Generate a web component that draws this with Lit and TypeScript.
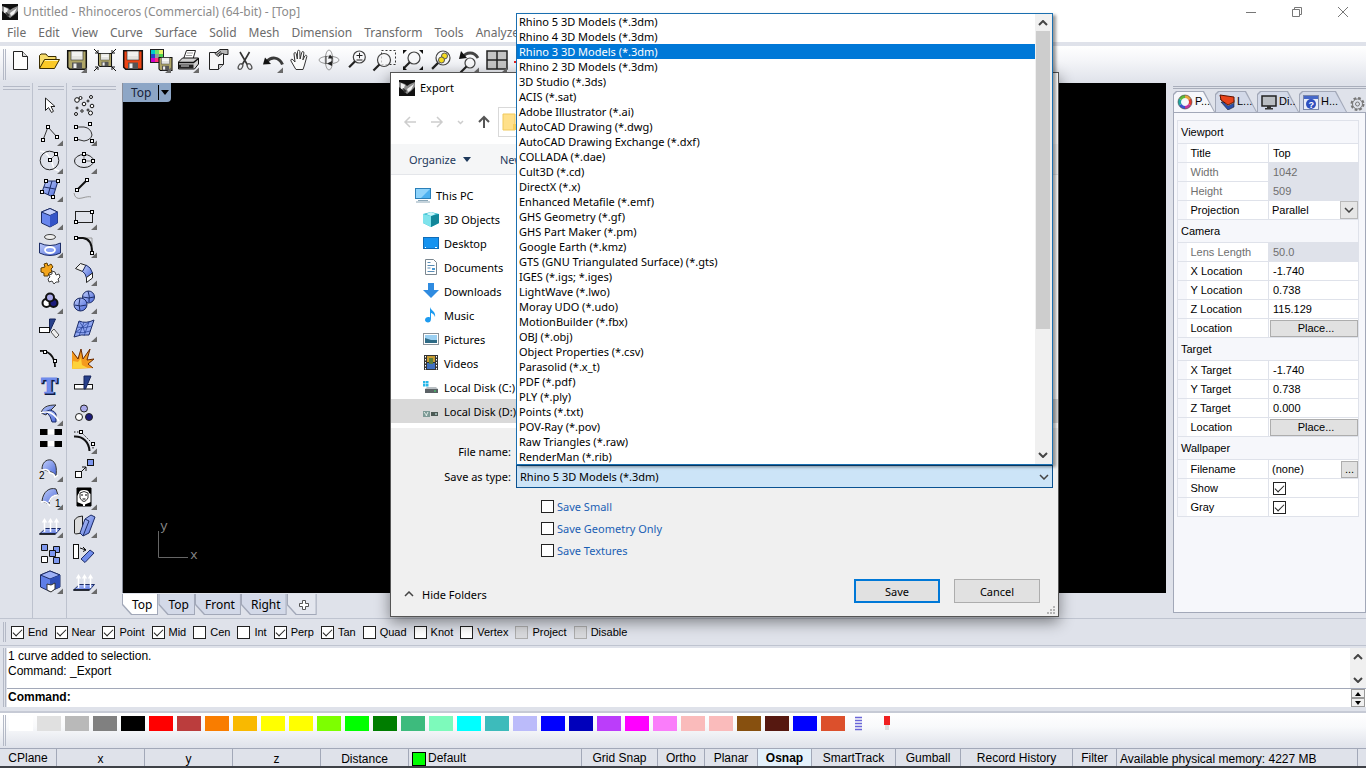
import { LitElement, html, svg, css, nothing } from "lit";
import { customElement, state } from "lit/decorators.js";
import { classMap } from "lit/directives/class-map.js";

const node = (x: number, y: number) =>
  svg`<rect x=${x - 1.5} y=${y - 1.5} width="3" height="3" fill="#fff" stroke="#000"/>`;
const dot = (x: number, y: number, r: number) =>
  svg`<circle cx=${x} cy=${y} r=${r} fill="#fff" stroke="#111"/>`;
const corner = svg`<path d="M25 21.500v5.500h-6z" fill="#6a6a6a"/>`;

const floppy = (x: number, y: number, s: number, body: string) => svg`
  <g transform="translate(${x} ${y}) scale(${s / 20})">
    <path d="M.7.700h18.600v18.600h-16.600l-2-2z" fill=${body} stroke="#111" stroke-width="1.500"/>
    <rect x="4" y="1" width="12" height="9" fill="#e4e4e0" stroke="#333" stroke-width=".6"/>
    <path d="M5 3h10M5 5h10" stroke="#fff"/>
    <rect x="5" y="12.500" width="10" height="6.500" fill="#555"/>
    <rect x="6.500" y="13.500" width="3" height="4.500" fill="#eee"/>
  </g>`;

const lens = (x: number, y: number, r: number) => svg`
  <circle cx=${x} cy=${y} r=${r} fill="#f8f8fa" fill-opacity=".7" stroke="#444" stroke-width="1.200"/>
  <path d="M${x - r * 0.7} ${y + r * 0.7}L${x - r * 0.7 - 6} ${y + r * 0.7 + 6}" stroke="#222" stroke-width="2.200"/>`;

const liftArrows = svg`
  <path d="M1.500 23L7.500 17.500h15L17.500 23z" fill="url(#blue)" stroke="#1c2c66"/>
  <path d="M1.500 23h16" stroke="#111" stroke-width="1.500"/>
  <path d="M6.500 21V9M12.500 21V9M18.500 21V9" stroke="#fff" stroke-width="1.500"/>
  <path d="M3.800 11.500L6.500 7l2.700 4.500zM9.800 11.500L12.500 7l2.700 4.500zM15.800 11.500L18.500 7l2.700 4.500z" fill="#fff"/>`;

const TOP_ICONS: [string, unknown, boolean][] = [
  ["New", svg`<path d="M7.500 5.500h9l5 5v13h-14z" fill="#fdfdfd" stroke="#222"/><path d="M16.500 5.500v5h5" fill="#ddd" stroke="#222"/>`, false],
  ["Open", svg`<path d="M5.500 22V9.500l1.500-1.500h5l2 2.500h8v3" fill="#f7dc6a" stroke="#3a2c00"/><path d="M5.500 22.500l5-9h15l-5 9z" fill="#fbc926" stroke="#3a2c00"/><path d="M11 14.500h13" stroke="#fff3b0"/>`, false],
  ["Save", floppy(5, 4, 20, "#aea567"), true],
  ["Save small", svg`${floppy(8, 7, 14, "#aea567")}<path d="M4 3l4 4M8 4v3H5M26 3l-4 4M22 4v3h3M4 25l4-4M5 21h3v3M26 25l-4-4M25 21h-3v3" fill="none" stroke="#111"/>`, false],
  ["Save as", floppy(5, 4, 20, "#ee4413"), false],
  ["Export selected", svg`<rect x="4.500" y="3.500" width="13" height="13" fill="#4bd04e" stroke="#222"/><path d="M5 4h4v4H5z" fill="#0cc"/><path d="M9 4h4v4H9z" fill="#6ee46a"/><path d="M13 4h4v4h-4z" fill="#e8f06a"/><path d="M5 8h4v4H5z" fill="#24c"/><path d="M5 12h4v4H5z" fill="#c0c"/><path d="M9 12h4v4H9z" fill="#f37"/><path d="M9 8h4v4H9z" fill="#999"/>${floppy(12.5, 11, 14, "#aea567")}`, true],
  ["Print", svg`<path d="M9.500 13l3-8.500h9l-2.500 8.500z" fill="#fff" stroke="#222"/><path d="M13 7h6M12 9.500h6" stroke="#999"/><path d="M4.500 16l4-4h16v6l-4 5h-16z" fill="#d0d0d0" stroke="#111"/><path d="M4.500 16.500h15l5-4" fill="none" stroke="#111" stroke-width="1.500"/><path d="M5 18.500h14.500v4H5z" fill="#222"/><path d="M7 20h8" stroke="#ddd"/>`, true],
  ["Document properties", svg`<path d="M7.500 6.500h14v12l-5 5h-9z" fill="#f6f6f6" stroke="#222"/><path d="M16.500 23.500v-5h5" fill="#ccc" stroke="#222"/><path d="M13 7.500l5-4h8v5h-3l-2.500-1-4.500 3z" fill="#b8b8b8" stroke="#222"/><path d="M15 8.500l4-3M17 9l3-2" stroke="#333"/>`, false],
  ["Cut", svg`<path d="M10 6l7.500 13M19.500 6L12 19" stroke="#333" stroke-width="1.600"/><ellipse cx="10.500" cy="20.500" rx="2" ry="3" transform="rotate(30 10.500 20.500)" fill="none" stroke="#555" stroke-width="1.300"/><ellipse cx="19.500" cy="20.500" rx="2" ry="3" transform="rotate(-30 19.500 20.500)" fill="none" stroke="#555" stroke-width="1.300"/>`, false],
  ["Undo", svg`<path d="M9 15.500c4-5 12-5 15.500 3" fill="none" stroke="#3a3a3a" stroke-width="3"/><path d="M5 18.500l2-7 6 6.500z" fill="#111"/>`, true],
  ["Pan", svg`<path d="M9 22l-4-7c-.8-1.500.8-2.500 2-1.200l2 2.200-1-8c-.2-1.800 2-1.800 2.300-.2l1 5.200.2-7.500c0-1.600 2.200-1.600 2.300 0l.3 7.500 1.600-6.500c.4-1.500 2.400-1.200 2.200.4l-1 7 2-4c.8-1.300 2.300-.5 1.900.8L18.500 19l-1.500 4.500h-7z" fill="#fafafa" stroke="#333"/>`, false],
  ["Rotate view", svg`<ellipse cx="15" cy="14" rx="10" ry="3.800" fill="none" stroke="#999"/><ellipse cx="15" cy="14" rx="3.800" ry="10" fill="none" stroke="#999"/><path d="M13 17.500l5-2.500v5zM16 8.500l3 4h-5z" fill="#222"/><path d="M12 10v8M18 10v7" stroke="#333"/>`, false],
  ["Zoom dynamic", svg`${lens(17.3, 11, 6)}<path d="M14.500 9.500h6M17.500 6.800v5.500M14.500 14h6" stroke="#222"/>`, false],
  ["Zoom window", svg`<rect x="11.500" y="4.500" width="14" height="14" fill="none" stroke="#333" stroke-dasharray="2 2"/>${lens(14, 14, 6.5)}`, false],
  ["Zoom extents", svg`${lens(16, 12, 6)}<path d="M5 8V4h4zM25 8V4h-4zM5 20v4h4zM25 20v4h-4z" fill="#111"/>`, false],
  ["Zoom selected", svg`${lens(17, 12, 7)}<circle cx="18.500" cy="10" r="3" fill="#f5dc20" stroke="#555"/><circle cx="15.500" cy="14" r="3" fill="#f5dc20" stroke="#555"/>`, false],
  ["Undo view", svg`${lens(16, 17, 5)}<path d="M9 11c3-5 11-6 15 1" fill="none" stroke="#444" stroke-width="2.800"/><path d="M5 13l2-8 6 7z" fill="#111"/>`, true],
  ["Four viewports", svg`<rect x="5" y="5" width="20" height="18" fill="#c4c4c4" stroke="#222" stroke-width="1.500"/><path d="M15 5v18M5 14h20" stroke="#222" stroke-width="1.500"/>`, true],
  ["Named views", svg`<path d="M4 15h8v2H4z" fill="#d22"/>`, false],
];

const SIDE_A: [string, unknown, boolean][] = [
  ["Select", svg`<path d="M7.500 7v12.500l3-3 3 5 2-1.200-2.500-4.800h4z" fill="#fff" stroke="#222"/>`, false],
  ["Polyline", svg`<path d="M5 21L10 8l9 10" fill="none" stroke="#333"/>${node(10, 8)}${node(19, 18)}${node(5, 21)}`, true],
  ["Circle", svg`<path d="M2 4l5 1 6 7 3 10 5 2" fill="none" stroke="#fff" stroke-width="1.500"/><circle cx="11.500" cy="13.500" r="9.300" fill="none" stroke="#222"/><path d="M12 13l6-6" stroke="#888"/>${node(12, 13)}${node(18, 7)}`, true],
  ["Surface", svg`<path d="M8 6l12 0-5 16-11-5z" fill="url(#blue)" stroke="#1c2c66"/><path d="M14 6l-4 14M6 12l11 2" stroke="#1c2c66"/>${node(8, 6)}${node(20, 6)}${node(15, 22)}${node(4, 17)}`, true],
  ["Box", svg`<path d="M3.500 9l8.500-3.500 7.500 3.500v11L12 24l-8.500-4z" fill="#6886ee" stroke="#1c2c66"/><path d="M3.500 9l8.500-3.500 7.500 3.500-7.500 3.500z" fill="#c4d0fb" stroke="#1c2c66"/><path d="M12 12.500l7.500-3.500v11L12 24z" fill="#3555c8"/>`, true],
  ["Drape", svg`<ellipse cx="12" cy="6" rx="5.500" ry="2.500" fill="#eee" stroke="#444"/><path d="M1.500 12q10.500 5 21 0v10q-10.500 5-21 0z" fill="url(#blue)" stroke="#1c2c66"/><ellipse cx="12" cy="19" rx="5" ry="3" fill="#8aa2f4" stroke="#fff" stroke-width="1.800"/>`, true],
  ["Plug-ins", svg`<path d="M3 9l4-1-1-3 3-1 1 3 3-2 2 3-2 2 1 3-3 1-1 3-4 0 0-3-3-1z" fill="#f3a51c" stroke="#5d3c00"/><path d="M11 16l3-1 0-3 3 1 1 3 3-1 1 3-2 2 1 3-3 0-2 2-2-3-3 1-1-3 2-2z" fill="#fff" stroke="#444"/>`, false],
  ["Boolean", svg`<g stroke="#111" stroke-width="2"><circle cx="8.500" cy="16" r="4" fill="#fff"/><circle cx="15.500" cy="16" r="4" fill="#1c1c7c"/><circle cx="12" cy="10.500" r="4" fill="#a9a9ea"/></g>`, true],
  ["Split", svg`<path d="M11.500 4h6L11.500 17z" fill="#27408b" stroke="#14235a"/><rect x="1.500" y="12.500" width="10" height="5" fill="#fff" stroke="#111"/><path d="M13 17l3-3 5 6-3 3z" fill="#eee" stroke="#555"/>`, false],
  ["Edit points", svg`<path d="M2 8c8-1 15 5 15 16" fill="none" stroke="#111" stroke-width="1.800"/>${node(7, 9)}${node(17, 18)}`, false],
  ["Text object", svg`<g font-family="Liberation Serif, serif" font-weight="bold" font-size="24"><text x="4" y="23" fill="#0e1a40" stroke="#0e1a40" stroke-width="2">T</text><text x="3" y="22" fill="#6f8ceb" stroke="#6f8ceb">T</text></g>`, false],
  ["Rebuild", svg`<path d="M3 14c2-6 6-8 15-8l-5 5q-4 2-5 5z" fill="url(#blue)" stroke="#333"/><path d="M4 14q7-3 10 9h4V15q-1-3-6-4z" fill="url(#blue)" stroke="#1c2c66"/><path d="M2 14q7-2 11 0t8 8" fill="none" stroke="#fff" stroke-width="1.500"/>`, true],
  ["Array", svg`<path d="M2 2.500h22v5H2zM2 14h22v5H2z" fill="#fff"/><path d="M2 2h7.500v6H2zM16.500 2H24v6h-7.500zM2 14h7.500v6H2zM16.500 14H24v6h-7.500z" fill="#000"/>`, false],
  ["Curve degree 2", svg`<path d="M4 14c0-6 4-10 9-9 5 2 6 8 5 16-3-5-7-4-14-7z" fill="url(#blue)" stroke="#333"/><path d="M4 15q6-2 8 3 4 0 5 4l3-2" fill="none" stroke="#fff" stroke-width="1.500"/><text x="1" y="24" font-family="Liberation Sans, sans-serif" font-size="10" fill="#000">2</text>`, true],
  ["Curve degree 1", svg`<path d="M4 18C5 9 11 4 18 6l2 6c-7 0-8 4-9 9z" fill="url(#blue)" stroke="#333"/><path d="M3 19q5-2 9 4m-1-4q2-7 9-7" fill="none" stroke="#fff" stroke-width="1.500"/><text x="17" y="24" font-family="Liberation Sans, sans-serif" font-size="10" fill="#000">1</text>`, true],
  ["Extrude", liftArrows, true],
  ["Group", svg`<g fill="#7d97ee" stroke="#111"><path d="M3.500 5.500h6v6h-6z"/><path d="M15.500 7.500h6v6h-6z"/><path d="M11.500 11.500h6v6h-6z"/><path d="M15.500 18.500h6v6h-6z"/><path d="M3.500 17.500h6v6h-6z" fill="#fff"/></g>`, false],
  ["Solid tools", svg`<path d="M2.500 8L12 4l10 4v12l-10 4.500L2.500 20z" fill="#5f7fe8" stroke="#1c2c66"/><path d="M2.500 8L12 4l10 4-10 4z" fill="#9db1f6" stroke="#1c2c66"/><path d="M12 12l10-4v12l-10 4z" fill="#2f4fb8"/><path d="M9 17l4 1 4-2v6l-4 3-4-2z" fill="#fff" stroke="#333"/>`, true],
];

const SIDE_B: [string, unknown, boolean][] = [
  ["Points", svg`${dot(5, 9, 2.3)}${dot(8.5, 7, 1.5)}${dot(19, 6, 1.5)}${dot(16, 10, 1)}${dot(12, 13, 1.8)}${dot(5, 17, 1)}${dot(20, 15, 1.8)}${dot(10, 20, 1.2)}${dot(16, 19, 1)}${dot(4, 23, 1.5)}${dot(18.5, 22, 2)}`, false],
  ["Curve", svg`<path d="M4 8h8q7 1 8 8-1 5-8 6L4 20" fill="none" stroke="#333"/>${node(4, 8)}${node(18, 5)}${node(4, 20)}${node(20, 22)}`, true],
  ["Ellipse", svg`<ellipse cx="12" cy="14" rx="9.500" ry="6.500" fill="none" stroke="#222"/><path d="M12 7v7h9" fill="none" stroke="#777"/>${node(12, 7)}${node(12, 14)}${node(21, 14)}`, true],
  ["Extend", svg`<path d="M2 18q1 7 8 5t9-1" fill="none" stroke="#999"/><path d="M5 15L15 5" stroke="#111" stroke-width="2"/>${node(5, 15)}${node(15, 5)}`, false],
  ["Rectangle", svg`<rect x="3.500" y="8.500" width="17" height="11" fill="none" stroke="#222"/>${node(20, 9)}${node(4, 19)}`, true],
  ["Fillet", svg`<path d="M12 7h8v8" fill="none" stroke="#999"/><path d="M4 7h7q9 1 9 14" fill="none" stroke="#111" stroke-width="2"/>${node(4, 7)}${node(20, 22)}`, true],
  ["Bend surface", svg`<path d="M3.500 9.500l5-5 6 2-4 6z" fill="#eee" stroke="#222"/><path d="M14 6q5 2 6.500 8l-6 5q-1-5-4-6.500z" fill="url(#blue)" stroke="#1c2c66"/><path d="M20.500 14v5l-6 4.500v-5z" fill="#fff" stroke="#222"/>`, true],
  ["Spheres", svg`<circle cx="16.500" cy="10" r="6" fill="url(#blue)" stroke="#1c2c66"/><circle cx="8.500" cy="17.500" r="6.500" fill="url(#blue)" stroke="#1c2c66"/><path d="M2.500 18q6 2 12 0M8 11q-2 6 0 13M11 10q6 2 11 0M16 4q2 5 1 11" fill="none" stroke="#1c2c66"/>`, true],
  ["Mesh", svg`<path d="M7 6q7 3 15-1l-5 15q-8-1-15 2z" fill="#8fa6f2" stroke="#1c2c66"/><path d="M12 7L7 21M17 7l-5 14M5 12q7 2 15-1M4 17q7 2 14-1M7 6l4 6-7 5M17 7l-6 5 2 6" fill="none" stroke="#2c469c" stroke-width=".8"/>`, true],
  ["Explode", svg`<path d="M0 26V8l6 7 3-9 2 10L18 6l-3 11 7-1-6 5 5 4z" fill="#f49a1e"/><path d="M0 8l6 8 3-10 2 10L18 6l-3 11 7-1-6 5 5 4" fill="none" stroke="#6b2a00"/><path d="M0 26l1-8 5 1 3-4 1 7 6 3z" fill="#fdd23a"/>`, false],
  ["Trim", svg`<rect x="2.500" y="13.500" width="18" height="4.500" fill="#fff" stroke="#111"/><path d="M12 5h7l-5.500 13H12z" fill="#27408b" stroke="#14235a"/>`, false],
  ["Colors", svg`<g stroke="#222"><circle cx="12" cy="9.500" r="3.500" fill="#a9a9ea"/><circle cx="7" cy="18" r="3.500" fill="#fff"/><circle cx="17" cy="18" r="3.500" fill="#1c1c7c"/></g>`, false],
  ["Control points", svg`<path d="M2 5h7l12 12v6" fill="none" stroke="#111" stroke-dasharray="1.500 1.500"/><path d="M2 9.500C11 9 17 15 17.500 24" fill="none" stroke="#111" stroke-width="2"/>${node(9, 5)}${node(21, 17)}`, true],
  ["Move", svg`<rect x="15.500" y="4.500" width="6" height="6" fill="#7d97ee" stroke="#111"/><rect x="3.500" y="16.500" width="6" height="6" fill="#fff" stroke="#111"/><path d="M10 16l4-4m-4 0h4v4" fill="none" stroke="#111"/>`, true],
  ["Picture frame", svg`<path d="M5 5h14v18H5z" fill="#fff" stroke="#000"/><path d="M5 5h14v6l-2-1q0-3-5-3T7 10l-2 3z"/><path d="M8 10q4-3 8 0v5q-4 7-8 0z" fill="#fff" stroke="#000" stroke-width=".8"/><path d="M9 12h2M13 12h2M10.500 16h3" stroke="#000"/><path d="M5 23v-4l5 2 2 1 2-1 5-2v4z"/><path d="M11 20h2v3h-2z" fill="#fff"/>`, true],
  ["Align", svg`<path d="M2.500 9l3-3 5-1v17l-7 1-1-1z" fill="#dcdcdc" stroke="#222"/><path d="M13 8l6-4 4 2-6 16-6 3-3-3z" fill="url(#blue)" stroke="#1c2c66"/><path d="M13 8l4 2-6 15" fill="none" stroke="#1c2c66"/>`, true],
  ["Orient", svg`<rect x="1.500" y="5.500" width="5" height="14" fill="#fff" stroke="#111"/><path d="M8 9l6 2m-3-3l3 3-3 1.500" fill="none" stroke="#111"/><path d="M9 20l9-9 4 3-9 9.500z" fill="#6f8ceb" stroke="#1c2c66"/>`, false],
  ["Extrude surface", liftArrows, true],
];

const TREE: [string, unknown][] = [
  ["This PC", svg`<rect x=".5" y="1.500" width="15" height="10" fill="#4cb1f0" stroke="#2a7fb8"/><path d="M1 2h14L6 11H1z" fill="#8ed3fb"/><path d="M3 13.500h10M1 15h14" stroke="#8ba7b8"/>`],
  ["3D Objects", svg`<path d="M0 3l8-2 8 2v9l-8 4-8-4z" fill="#23b5c8"/><path d="M0 3l8 2v11l-8-4z" fill="#7fe3ec"/><path d="M8 5l8-2v9l-8 4z" fill="#11879a"/><path d="M3 3l5-2 5 2-5 2z" fill="#c9f6fa"/>`],
  ["Desktop", svg`<rect x=".5" y="2.500" width="15" height="11" fill="#1593f0" stroke="#0f6cb8"/><path d="M2 12.500h1M12 12.500h2" stroke="#fff"/>`],
  ["Documents", svg`<path d="M2.500.500h8l3 3v12h-11z" fill="#fff" stroke="#7a8790"/><path d="M4.500 3.500h3M4.500 6.500h7M4.500 9h3M4.500 12.500h7" stroke="#5b8db5"/><path d="M9 9h3v2H9z" fill="#4a9ad4"/>`],
  ["Downloads", svg`<path d="M5 0h6v7h5l-8 8-8-8h5z" fill="#2f8be0"/>`],
  ["Music", svg`<path d="M7 0c1 4 6 4 5 10-1-3-3-4-4-4v6c0 5-6 4-6 1 0-2.500 3-3.500 5-2.500z" fill="#1d9bf0"/>`],
  ["Pictures", svg`<rect x=".5" y="2.500" width="15" height="11" fill="#fff" stroke="#8a9299"/><path d="M2 4h12v8H2z" fill="#9bd0f2"/><path d="M2 7l6 2 6 0v3H2z" fill="#2e6b86"/>`],
  ["Videos", svg`<path d="M1 0h14v15H1z" fill="#333"/><path d="M4 1h8v6H4z" fill="#c79b32"/><path d="M4 8h8v6H4z" fill="#3f6fc0"/><path d="M6 3h4v6H6z" fill="#5b7f3a"/><path d="M2.500 1v14M13.500 1v14" stroke="#fff" stroke-dasharray="1.500 1.500"/>`],
  ["Local Disk (C:)", svg`<path d="M0 2h2.500v2.500H0zM3 2h2.500v2.500H3zM0 5h2.500v2.500H0zM3 5h2.500v2.500H3z" fill="#27b7e8"/><path d="M2 10l2-2h9l2 2z" fill="#b9bfc3"/><path d="M2 10h13v4H2z" fill="#5b6266"/><path d="M11 12h2" stroke="#3fe36a"/>`],
  ["Local Disk (D:)", svg`<path d="M0 8h7v6H0z" fill="#7d9a96"/><path d="M1 9l3 4M5 9l-2 4" stroke="#e4efe9"/><path d="M8 9h7v4H8z" fill="#4d5a55"/><path d="M12 11h2" stroke="#dff"/>`],
];

const FORMATS = [
  "Rhino 5 3D Models (*.3dm)", "Rhino 4 3D Models (*.3dm)", "Rhino 3 3D Models (*.3dm)", "Rhino 2 3D Models (*.3dm)",
  "3D Studio (*.3ds)", "ACIS (*.sat)", "Adobe Illustrator (*.ai)", "AutoCAD Drawing (*.dwg)",
  "AutoCAD Drawing Exchange (*.dxf)", "COLLADA (*.dae)", "Cult3D (*.cd)", "DirectX (*.x)", "Enhanced Metafile (*.emf)",
  "GHS Geometry (*.gf)", "GHS Part Maker (*.pm)", "Google Earth (*.kmz)", "GTS (GNU Triangulated Surface) (*.gts)",
  "IGES (*.igs; *.iges)", "LightWave (*.lwo)", "Moray UDO (*.udo)", "MotionBuilder (*.fbx)", "OBJ (*.obj)",
  "Object Properties (*.csv)", "Parasolid (*.x_t)", "PDF (*.pdf)", "PLY (*.ply)", "Points (*.txt)", "POV-Ray (*.pov)",
  "Raw Triangles (*.raw)", "RenderMan (*.rib)",
];

const MENUS = ["File", "Edit", "View", "Curve", "Surface", "Solid", "Mesh", "Dimension", "Transform", "Tools", "Analyze"];

const SNAPS: [string, boolean, boolean?][] = [
  ["End", true], ["Near", true], ["Point", true], ["Mid", true], ["Cen", false], ["Int", false], ["Perp", true],
  ["Tan", true], ["Quad", false], ["Knot", false], ["Vertex", false], ["Project", false, true], ["Disable", false, true],
];

const COLORS = [
  "#ffffff", "#e0e0e0", "#b9b9b9", "#808080", "#000000", "#ff0000", "#bb3d3d", "#f97d00", "#f9b900", "#ffff00",
  "#ffff00", "#7dff00", "#00ff00", "#007d00", "#3dbb7d", "#7dfabb", "#00ffff", "#3dbbbb", "#bbbbfa", "#0000ff",
  "#0000bb", "#bb3dfa", "#ff00ff", "#fa7dfa", "#fabbbb", "#fabbbb", "#87500f", "#561810", "#0000ff", "#dc502c",
];

type Prop = { label: string; value?: string; kind?: "readonly" | "select" | "place" | "file" | "check" };
const GROUPS: { title: string; rows: Prop[] }[] = [
  { title: "Viewport", rows: [
    { label: "Title", value: "Top" },
    { label: "Width", value: "1042", kind: "readonly" },
    { label: "Height", value: "509", kind: "readonly" },
    { label: "Projection", value: "Parallel", kind: "select" },
  ] },
  { title: "Camera", rows: [
    { label: "Lens Length", value: "50.0", kind: "readonly" },
    { label: "X Location", value: "-1.740" },
    { label: "Y Location", value: "0.738" },
    { label: "Z Location", value: "115.129" },
    { label: "Location", kind: "place" },
  ] },
  { title: "Target", rows: [
    { label: "X Target", value: "-1.740" },
    { label: "Y Target", value: "0.738" },
    { label: "Z Target", value: "0.000" },
    { label: "Location", kind: "place" },
  ] },
  { title: "Wallpaper", rows: [
    { label: "Filename", value: "(none)", kind: "file" },
    { label: "Show", kind: "check" },
    { label: "Gray", kind: "check" },
  ] },
];

const PANEL_TABS: [string, unknown][] = [
  ["P...", svg`<g fill="none" stroke-width="3"><path d="M8 2.500a5.500 5.500 0 0 1 4.700 2.700" stroke="#e8a33c"/><path d="M12.700 5.200a5.500 5.500 0 0 1 0 5.500" stroke="#e23b2e"/><path d="M12.700 10.800A5.500 5.500 0 0 1 8 13.500" stroke="#c2359a"/><path d="M8 13.500a5.500 5.500 0 0 1-4.700-2.700" stroke="#3a52d0"/><path d="M3.300 10.800a5.500 5.500 0 0 1 0-5.500" stroke="#1ea7a0"/><path d="M3.300 5.200A5.500 5.500 0 0 1 8 2.500" stroke="#5cb83a"/></g><circle cx="8" cy="8" r="7" fill="none" stroke="#444" stroke-width=".6"/>`],
  ["L...", svg`<path d="M2 8l7 8 6-3V8z" fill="#2a4fae" stroke="#222" stroke-width=".6"/><path d="M1 5l8 7 6-3V6z" fill="#f2f2f2" stroke="#333" stroke-width=".6"/><path d="M1 1l14 2v5l-6 3-7-5z" fill="#e8431a" stroke="#5d1200"/>`],
  ["Di...", svg`<rect x="1" y="2" width="14" height="10" fill="#b9bdc2" stroke="#222" stroke-width="1.500"/><path d="M6 12h4v2H6zM4 14h8v1.500H4z" fill="#333"/>`],
  ["H...", svg`<rect x=".5" y="1.500" width="15" height="14" fill="#e8ecf8" stroke="#7a86a8"/><path d="M1 2h14v3H1z" fill="#4668c8"/><circle cx="8" cy="10" r="5" fill="#2d4fc0"/><text x="5.500" y="13.500" font-family="Liberation Sans, sans-serif" font-weight="bold" font-size="9" fill="#fff">?</text>`],
];

const rhino = svg`<rect width="16" height="16" fill="#111"/><path d="M0 2l6 2 2 2 3-2 5-2v5l-4 4-4 3-3-3-5-4z" fill="#8d8d8d"/><path d="M2 3l4 2-1 3-3 1zM8 9l7-5-3 6-3 2z" fill="#f2f2f2"/><path d="M4 8l4 3-3 2z" fill="#333"/>`;
const chevron = (d: "up" | "down") =>
  html`<svg class="chev" viewBox="0 0 10 6" aria-hidden="true"><path d=${d === "up" ? "M1 5l4-4 4 4" : "M1 1l4 4 4-4"}></path></svg>`;

@customElement("app-root")
export class AppRoot extends LitElement {
  @state() private highlighted = 2;

  static styles = css`
    :host {
      --ui: "Noto Sans", sans-serif;
      --ms: "Liberation Sans", Arial, sans-serif;
      --face: #dfe2ea;
      --line: #a2a8b8;
      display: flex;
      flex-direction: column;
      min-height: 100vh;
      position: relative;
      background: var(--face);
      color: #000;
      font: 11px/15px var(--ui);
      overflow: hidden;
    }
    *, *::before, *::after { box-sizing: border-box; }
    button, input, select { font: inherit; color: inherit; margin: 0; padding: 0; border: 0; background: none; border-radius: 0; appearance: none; outline: 0; }
    ul { list-style: none; margin: 0; padding: 0; }
    svg { display: block; flex: none; }
    .defs { position: absolute; width: 0; height: 0; }
    .i16 { width: 16px; height: 16px; }
    .i28 { width: 28px; height: 28px; }
    .chev { width: 10px; height: 6px; fill: none; stroke: #444; stroke-width: 1.500; }

    .titlebar { display: flex; align-items: center; height: 23px; padding-left: 2px; gap: 5px; background: #fff; color: #8b8b8b; }
    .titlebar .name { flex: 1; font-size: 12px; }
    .wins { display: flex; }
    .wins button { width: 46px; height: 20px; display: grid; place-items: center; }
    .wins svg { width: 12px; height: 12px; fill: none; stroke: #777; }
    .menu { display: flex; height: 19px; background: #fff; padding-left: 7px; gap: 12px; color: #6b6b6b; font-size: 12px; line-height: 19px; }
    .toolbar { display: flex; align-items: center; height: 41px; border-top: 4px solid var(--face); background: linear-gradient(#fff, #f4f5f8 40%, var(--face)); padding: 0 3px; }
    .grip { width: 3px; align-self: stretch; margin: 3px 0; border: solid #b4b9c6; border-width: 0 1px; }
    .toolbar button { height: 28px; align-self: flex-start; }

    .work { display: flex; flex: 1; min-height: 0; }
    .rail { border-right: 1px solid #bdc2ce; padding: 3px 2px 0 3px; }
    .rail ul { padding-top: 1px; }
    .rail .hgrip { height: 4px; border: solid #b4b9c6; border-width: 1px 0; }
    .rail.empty { width: 33px; }
    .rail.one { width: 34px; padding-left: 5px; }
    .rail.two { width: 55px; padding: 3px 6px 0 5px; border: 0; }
    .rail button { display: block; height: 28px; }

    .stage { flex: 1; display: flex; flex-direction: column; min-width: 0; }
    .view { flex: 1; background: #000; display: flex; flex-direction: column; justify-content: space-between; align-items: flex-start; border-left: 1px solid #8a8f9c; }
    .viewname { display: flex; align-items: center; height: 19px; background: #8da6c6; font-size: 12px; color: #16223a; border-radius: 0 0 4px 0; }
    .viewname span { padding: 0 7px 0 8px; }
    .viewname i { border: 4px solid transparent; border-top: 5px solid #000; border-bottom: 0; margin: 0 2px; }
    .viewname b { width: 1px; height: 15px; background: #000; }
    .axes { width: 50px; height: 44px; margin: 0 0 30px 31px; }
    .tabs { display: flex; height: 25px; align-items: flex-start; padding-top: 1px; font-size: 12px; }
    .tab { position: relative; height: 21px; padding: 0 6px 0 10px; background: var(--line); clip-path: polygon(0 0, 100% 0, 100% 100%, 9px 100%, 0 11px); z-index: 0; }
    .tab::before { content: ""; position: absolute; z-index: -1; inset: 0 1px 1px; background: #d3d9e8; clip-path: polygon(0 0, 100% 0, 100% 100%, 9px 100%, 0 10px); }
    .tab.on::before { background: #fff; }
    .tab.add::before { background: #e3e6ee; }
    .tab.add { padding: 0 8px 0 12px; }
    .tab svg { width: 10px; height: 10px; }

    .side { width: 200px; padding: 3px 0 5px 7px; display: flex; flex-direction: column; }
    .side .hgrip { height: 3px; border: solid #a9aebb; border-width: 1px 0; }
    .ptabs { display: flex; height: 23px; padding-top: 2px; align-items: stretch; font: 11px/19px var(--ms); }
    .ptab { position: relative; z-index: 0; width: 42px; display: flex; align-items: center; gap: 2px; padding-left: 4px; background: var(--line); clip-path: polygon(0 3px, 3px 0, calc(100% - 11px) 0, 100% 100%, 0 100%); }
    .ptab::before { content: ""; position: absolute; z-index: -1; inset: 1px 1px 0; background: #d3d9e8; clip-path: polygon(0 3px, 3px 0, calc(100% - 11px) 0, 100% 100%, 0 100%); }
    .ptab.on::before { background: #f6f7fb; }
    .ptab:last-of-type { width: 48px; }
    .gear { width: 16px; align-self: end; margin-left: auto; }
    .gear svg { width: 15px; height: 16px; }
    .sheet { flex: 1; background: #f6f7fb; border: 1px solid var(--line); padding: 7px 6px 0 3px; font: 11px/14px var(--ms); }
    table { width: 100%; border-collapse: collapse; table-layout: fixed; border: 1px solid var(--face); }
    th, td { text-align: left; font-weight: normal; padding: 0; height: 19px; border: solid var(--face); border-width: 1px 0; }
    .ghead { height: 23px; padding-left: 3px; }
    .gut { width: 9px; }
    .lab { width: 82px; background: #fff; border-right-width: 1px; padding-left: 4px; }
    .val { background: #fff; padding: 0; }
    .val input.txt { display: block; width: 100%; height: 18px; padding-left: 4px; }
    .off .lab, .off .val { color: #6f6f6f; }
    .off .val { background: var(--face); }
    .cell { display: flex; height: 18px; align-items: center; }
    .cell select, .cell .file { flex: 1; min-width: 0; height: 18px; padding-left: 3px; }
    .drop { width: 18px; height: 18px; background: #e6e6e6; border: 1px solid #b9b9b9; display: grid; place-items: center; pointer-events: none; }
    .btn { background: #e1e1e1; border: 1px solid #adadad; }
    .place { width: 88px; height: 17px; margin-left: 1px; padding-left: 4px; line-height: 13px; flex: 1; }
    .dots { width: 17px; height: 17px; line-height: 12px; }

    .cb { width: 13px; height: 13px; background: #fff; border: 1px solid #222; display: inline-grid; place-items: center; flex: none; }
    .cb:checked::before { content: ""; width: 9px; height: 5px; border: solid #222; border-width: 0 0 1px 1px; transform: translateY(-1px) rotate(-45deg); }
    .cb:disabled { background: #d8d9dc; border-color: #adadad; }
    .cell .cb { margin-left: 4px; }

    .snaps { display: flex; align-items: center; height: 28px; border: solid #bfc4d0; border-width: 1px 0; padding-left: 3px; gap: 7px; font: 11px/14px var(--ms); }
    .snaps .grip { margin-right: -2px; }
    .snaps label { display: flex; align-items: center; gap: 4px; }
    .cmd { display: flex; padding: 2px 0 4px 3px; gap: 1px; }
    .cmd .pane { flex: 1; background: #fff; font: 12px/15px var(--ms); }
    .cmd .grip { margin: 0; }
    .hist { display: flex; height: 41px; border-bottom: 1px solid var(--line); }
    .hist .log { flex: 1; padding: 1px 0 0 1px; }
    .bar { width: 16px; background: #f0f0f0; display: flex; flex-direction: column; justify-content: space-between; align-items: center; padding: 6px 0 5px; }
    .bar .chev, .list .chev { stroke-width: 2; }
    .entry { display: flex; height: 18px; align-items: center; padding-left: 1px; }
    .entry label { font-weight: bold; padding-bottom: 2px; }
    .entry input { flex: 1; }
    .spin { width: 15px; }
    .spin button { display: grid; place-items: center; width: 14px; height: 9px; background: #f0f0f0; border: 1px solid #999; }
    .spin i { border: 3px solid transparent; border-bottom: 4px solid #000; border-top: 0; }
    .spin i.dn { border-top: 4px solid #000; border-bottom: 0; }
    .palette { display: flex; align-items: flex-start; gap: 4px; height: 37px; border-top: 2px solid #c6cad5; padding: 0 3px; background: linear-gradient(#fff, #f8f9fb 40%, var(--face)); }
    .palette .grip { margin: 2px -1px 2px 0; }
    .palette button { width: 24px; height: 15px; margin-top: 3px; }
    .palette svg { width: 24px; height: 15px; margin-top: 3px; }

    .status { display: grid; grid-template-columns: 57px repeat(4, 88px) 173px 76px 47px 53px 54px 84px 65px 112px 44px 1fr 8px; height: 20px; border-top: 1px solid var(--line); border-bottom: 2px solid #3e4147; font: 12px/20px var(--ms); text-align: center; }
    .status > * { border-right: 1px solid var(--line); white-space: nowrap; height: 17px; line-height: 20px; }
    .status > button { padding-top: 2px; line-height: 15px; }
    .status > :last-child { border: 0; }
    .status .on { background: #e4f1fb; font-weight: bold; }
    .status .layer { display: flex; align-items: center; gap: 2px; padding-left: 3px; }
    .status .layer i { width: 14px; height: 14px; background: #0f0; border: 1px solid #000; }
    .status .left { text-align: left; padding-left: 3px; }

    .dialog { position: absolute; left: 390px; top: 72px; width: 669px; background: #fff; border: 1px solid #555; box-shadow: 0 5px 14px rgba(0, 0, 0, 0.45); }
    .dtitle { display: flex; align-items: center; gap: 5px; height: 29px; padding-left: 8px; }
    .nav { display: flex; align-items: center; height: 42px; padding: 0 0 2px 12px; gap: 13px; }
    .nav button svg { width: 14px; height: 14px; fill: none; stroke: #cdcdcd; stroke-width: 1.500; }
    .nav .small svg { width: 7px; }
    .nav .up svg { stroke: #555; stroke-width: 2; }
    .addr { flex: 1; height: 30px; margin: 0 14px 0 -6px; border: 1px solid #d9d9d9; padding: 5px 3px; }
    .addr svg { width: 16px; height: 18px; }
    .org { display: flex; align-items: center; gap: 29px; height: 31px; padding-left: 18px; background: #f5f6f7; border-bottom: 1px solid #e4e6ea; color: #1e395b; }
    .org button { display: flex; align-items: center; gap: 7px; }
    .org i { border: 4px solid transparent; border-top: 5px solid #1e395b; border-bottom: 0; }
    .tree { padding: 8px 0 5px; }
    .tree li { height: 24px; display: flex; align-items: center; gap: 5px; padding-left: 32px; }
    .tree li:first-child { padding-left: 24px; }
    .tree .sel { background: #d9d9d9; }
    .form { background: #f0f0f0; padding: 11px 5px 0 0; }
    .field { display: grid; grid-template-columns: 120px 1fr; column-gap: 5px; align-items: center; height: 25px; text-align: right; }
    .field > input { height: 23px; background: #fff; border: 1px solid #7a7a7a; }
    .combo { position: relative; height: 23px; text-align: left; }
    .combo select { width: 100%; height: 23px; background: #cce4f7; border: 1px solid #0a5291; padding-left: 3px; }
    .combo > .chev { position: absolute; right: 4px; top: 9px; }
    .list { position: absolute; left: 0; right: 0; bottom: 100%; display: flex; background: #fff; border: 1px solid #1a6fb0; box-shadow: 3px 2px 3px rgba(0, 0, 0, 0.4); }
    .list ul { flex: 1; }
    .list li { padding-left: 2px; line-height: 15px; height: 15px; white-space: nowrap; }
    .list li.hot { background: #0078d7; color: #fff; }
    .scroll { width: 17px; background: #f0f0f0; display: flex; flex-direction: column; align-items: center; padding: 6px 2px 6px 1px; }
    .thumb { width: 14px; height: 298px; margin-top: 5px; background: #cdcdcd; }
    .scroll .chev:last-child { margin-top: auto; }
    .opts { display: flex; flex-direction: column; padding: 6px 0 0 150px; color: #1a5fb4; }
    .opts label { display: flex; align-items: center; height: 22px; gap: 3px; }
    .foot { display: flex; align-items: center; gap: 14px; height: 50px; margin-top: 5px; padding: 0 13px; }
    .foot .hide { display: flex; align-items: center; gap: 8px; margin-right: auto; margin-top: 6px; }
    .foot .btn { width: 86px; height: 24px; }
    .foot .main { border: 2px solid #0078d7; }
    .resize { position: absolute; right: 3px; bottom: 2px; width: 9px; height: 9px; }
  `;

  private icons(list: [string, unknown, boolean][]) {
    return list.map(([name, art, more]) => html`<button aria-label=${name}>
      <svg class="i28" viewBox="0 0 28 28" fill="#000">${art}${more ? corner : nothing}</svg></button>`);
  }

  private prop(p: Prop, id: string) {
    const value = () => {
      switch (p.kind) {
        case "select":
          return html`<div class="cell"><select id=${id}><option>${p.value}</option></select><span class="drop">${chevron("down")}</span></div>`;
        case "place":
          return html`<div class="cell"><button id=${id} class="btn place">Place...</button></div>`;
        case "file":
          return html`<div class="cell"><input id=${id} class="file" .value=${p.value ?? ""}><button class="btn dots" aria-label="Browse">...</button></div>`;
        case "check":
          return html`<div class="cell"><input id=${id} class="cb" type="checkbox" checked></div>`;
        default:
          return html`<input id=${id} class="txt" .value=${p.value ?? ""} ?readonly=${p.kind === "readonly"}>`;
      }
    };
    return html`<tr class=${classMap({ off: p.kind === "readonly" })}>
      <td class="gut"></td><th class="lab" scope="row"><label for=${id}>${p.label}</label></th><td class="val">${value()}</td></tr>`;
  }

  private dialog() {
    return html`<section class="dialog" role="dialog" aria-label="Export">
      <div class="dtitle"><svg class="i16" viewBox="0 0 16 16">${rhino}</svg>Export</div>
      <div class="nav">
        <button aria-label="Back"><svg viewBox="0 0 14 14"><path d="M13 7H2M7 2L2 7l5 5"/></svg></button>
        <button aria-label="Forward"><svg viewBox="0 0 14 14"><path d="M1 7h11M7 2l5 5-5 5"/></svg></button>
        <button class="small" aria-label="Recent"><svg viewBox="0 0 7 14"><path d="M1 6l2.500 2.500L6 6"/></svg></button>
        <button class="up" aria-label="Up"><svg viewBox="0 0 14 14"><path d="M7 13V2M2 7l5-5 5 5"/></svg></button>
        <div class="addr"><svg viewBox="0 0 16 18"><path d="M1 1h12v16H1z" fill="#ffe08a" stroke="#f0c95c"/><path d="M11 11h4v6h-4z" fill="#f7cf5f"/></svg></div>
      </div>
      <div class="org"><button>Organize <i></i></button><button>New folder</button></div>
      <ul class="tree">${TREE.map(([name, art], i) => html`<li class=${classMap({ sel: i === 9 })}>
        <svg class="i16" viewBox="0 0 16 16" fill="none">${art}</svg>${name}</li>`)}</ul>
      <div class="form">
        <div class="field"><label for="fname">File name:</label><input id="fname"></div>
        <div class="field"><label for="ftype">Save as type:</label>
          <div class="combo">
            <select id="ftype">${FORMATS.map((f) => html`<option>${f}</option>`)}</select>
            ${chevron("down")}
            <div class="list">
              <ul role="listbox" aria-label="Save as type">${FORMATS.map((f, i) => html`<li role="option"
                class=${classMap({ hot: i === this.highlighted })}
                @mouseenter=${() => { this.highlighted = i; }}>${f}</li>`)}</ul>
              <div class="scroll">${chevron("up")}<div class="thumb"></div>${chevron("down")}</div>
            </div>
          </div>
        </div>
        <div class="opts">${["Save Small", "Save Geometry Only", "Save Textures"].map((t) =>
          html`<label><input class="cb" type="checkbox">${t}</label>`)}</div>
        <div class="foot">
          <button class="hide">${chevron("up")}Hide Folders</button>
          <button class="btn main">Save</button><button class="btn">Cancel</button>
        </div>
      </div>
      <svg class="resize" viewBox="0 0 9 9" fill="#b5b5b5"><path d="M7 1h2v2H7zM7 4h2v2H7zM7 7h2v2H7zM4 4h2v2H4zM4 7h2v2H4zM1 7h2v2H1z"/></svg>
    </section>`;
  }

  render() {
    return html`
      <svg class="defs" aria-hidden="true"><defs><linearGradient id="blue" x1="0" y1="0" x2="1" y2="1">
        <stop offset="0" stop-color="#c3d0fc"/><stop offset="1" stop-color="#4a68d8"/></linearGradient></defs></svg>
      <header class="titlebar">
        <svg class="i16" viewBox="0 0 16 16">${rhino}</svg>
        <span class="name">Untitled - Rhinoceros (Commercial) (64-bit) - [Top]</span>
        <div class="wins">
          <button aria-label="Minimize"><svg viewBox="0 0 12 12"><path d="M1 6.500h10"/></svg></button>
          <button aria-label="Restore"><svg viewBox="0 0 12 12"><path d="M1.500 3.500h7v7h-7zM3.500 3.500v-2h7v7h-2"/></svg></button>
          <button aria-label="Close"><svg viewBox="0 0 12 12"><path d="M1 1l10 10M11 1L1 11"/></svg></button>
        </div>
      </header>
      <nav class="menu">${MENUS.map((m) => html`<button>${m}</button>`)}</nav>
      <div class="toolbar"><span class="grip"></span>${this.icons(TOP_ICONS)}</div>
      <main class="work">
        <div class="rail empty"><div class="hgrip"></div></div>
        <div class="rail one"><div class="hgrip"></div><ul>${this.icons(SIDE_A)}</ul></div>
        <div class="rail two"><div class="hgrip"></div><ul>${this.icons(SIDE_B)}</ul></div>
        <div class="stage">
          <div class="view">
            <div class="viewname"><span>Top</span><b></b><i></i></div>
            <svg class="axes" viewBox="0 0 50 44"><path d="M4.500 12v26.500H34" fill="none" stroke="#666"/>
              <g font-family="Liberation Mono, monospace" font-size="13" fill="#888"><text x="6" y="11">y</text><text x="36" y="40">x</text></g></svg>
          </div>
          <div class="tabs">
            <button class="tab on">Top</button><button class="tab">Top</button><button class="tab">Front</button><button class="tab">Right</button>
            <button class="tab add" aria-label="New viewport"><svg viewBox="0 0 10 10"><path d="M3.500.500h3v3h3v3h-3v3h-3v-3h-3v-3h3z" fill="#fff" stroke="#555"/></svg></button>
          </div>
        </div>
        <aside class="side">
          <div class="hgrip"></div>
          <div class="ptabs">
            ${PANEL_TABS.map(([t, art], i) => html`<button class=${classMap({ ptab: true, on: i === 0 })}>
              <svg class="i16" viewBox="0 0 16 16">${art}</svg>${t}</button>`)}
            <span class="gear"><svg viewBox="0 0 15 16" fill="none" stroke="#777"><circle cx="7.500" cy="8" r="6" stroke-width="2" stroke-dasharray="2.700 2"/><circle cx="7.500" cy="8" r="5"/><circle cx="7.500" cy="8" r="2"/></svg></span>
          </div>
          <div class="sheet"><table>
            <colgroup><col class="gut"><col class="lab"><col></colgroup>
            ${GROUPS.map((g, gi) => html`<tbody><tr><th class="ghead" colspan="3">${g.title}</th></tr>
              ${g.rows.map((p, pi) => this.prop(p, `p${gi}-${pi}`))}</tbody>`)}
          </table></div>
        </aside>
      </main>
      <div class="snaps"><span class="grip"></span>
        ${SNAPS.map(([t, on, off]) => html`<label><input class="cb" type="checkbox" ?checked=${on} ?disabled=${off}>${t}</label>`)}</div>
      <div class="cmd"><span class="grip"></span>
        <div class="pane">
          <div class="hist"><div class="log"><div>1 curve added to selection.</div><div>Command: _Export</div></div>
            <div class="bar">${chevron("up")}${chevron("down")}</div></div>
          <div class="entry"><label for="cmd">Command:</label><input id="cmd">
            <div class="spin"><button aria-label="Previous"><i></i></button><button aria-label="Next"><i class="dn"></i></button></div></div>
        </div>
      </div>
      <div class="palette"><span class="grip"></span>
        ${COLORS.map((c) => html`<button aria-label=${c} style="background:${c}"></button>`)}
        <svg viewBox="0 0 24 15"><path d="M6 1.500h7M6 4.500h7M6 7.500h7M6 10.500h7M6 13.500h7" stroke="#6a66d8" stroke-width="1.500"/></svg>
        <svg viewBox="0 0 24 15"><path d="M7 0h6v9H7z" fill="#f02020"/><path d="M8 9h4v5H8z" fill="#ddd"/></svg>
      </div>
      <footer class="status">
        <button>CPlane</button><span>x</span><span>y</span><span>z</span><span>Distance</span>
        <button class="layer"><i></i>Default</button>
        <button>Grid Snap</button><button>Ortho</button><button>Planar</button><button class="on">Osnap</button>
        <button>SmartTrack</button><button>Gumball</button><button>Record History</button><button>Filter</button>
        <span class="left">Available physical memory: 4227 MB</span><span></span>
      </footer>
      ${this.dialog()}`;
  }
}
